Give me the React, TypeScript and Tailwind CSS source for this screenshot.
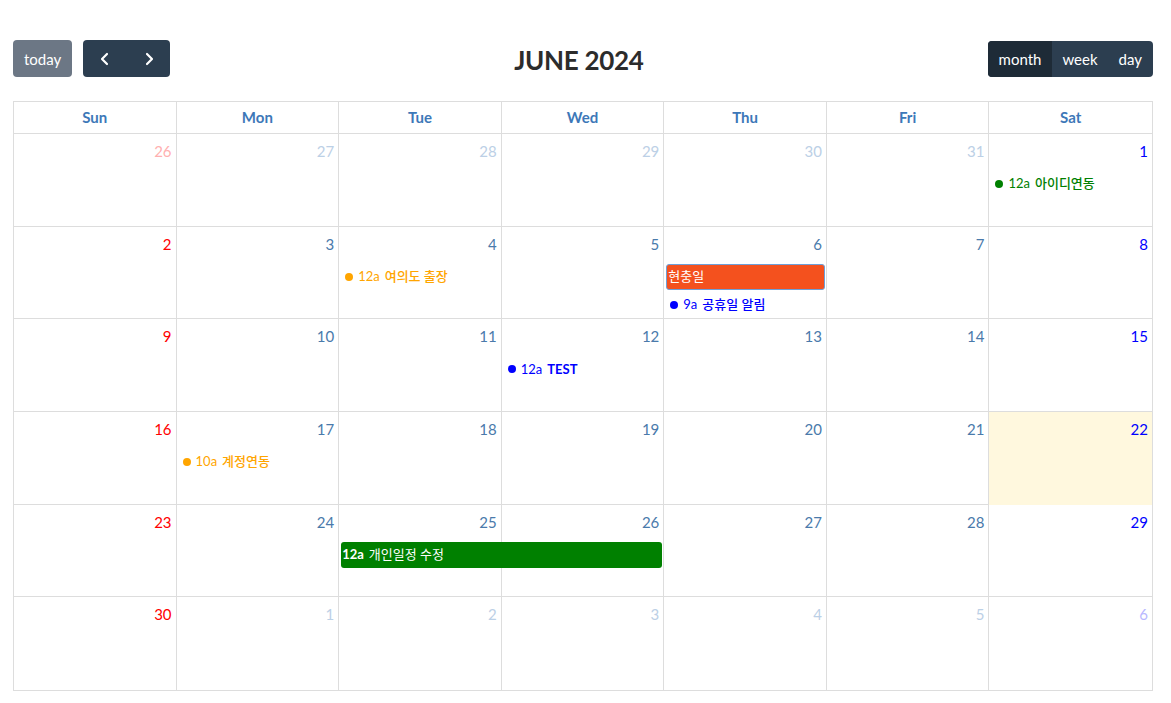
import React from 'react';

type Day = { n: number; cur: boolean };
type Ev = {
  week: number;
  col: number;
  span?: number;
  row: number;
  kind: 'dot' | 'block';
  time?: string;
  title: string;
  color: string;
  bold?: boolean;
};

const COL_START = ['', 'col-start-1', 'col-start-2', 'col-start-3', 'col-start-4', 'col-start-5', 'col-start-6', 'col-start-7'];
const COL_SPAN = ['', 'col-span-1', 'col-span-2', 'col-span-3'];
const ROW_START = ['', 'row-start-1', 'row-start-2', 'row-start-3'];

const weeks: Day[][] = [
  [26, 27, 28, 29, 30, 31].map((n) => ({ n, cur: false })).concat([{ n: 1, cur: true }]),
  [2, 3, 4, 5, 6, 7, 8].map((n) => ({ n, cur: true })),
  [9, 10, 11, 12, 13, 14, 15].map((n) => ({ n, cur: true })),
  [16, 17, 18, 19, 20, 21, 22].map((n) => ({ n, cur: true })),
  [23, 24, 25, 26, 27, 28, 29].map((n) => ({ n, cur: true })),
  [{ n: 30, cur: true }].concat([1, 2, 3, 4, 5, 6].map((n) => ({ n, cur: false }))),
];

const events: Ev[] = [
  { week: 0, col: 7, row: 2, kind: 'dot', time: '12a', title: '아이디연동', color: '#008000' },
  { week: 1, col: 3, row: 2, kind: 'dot', time: '12a', title: '여의도 출장', color: '#ffa500' },
  { week: 1, col: 5, row: 2, kind: 'block', title: '현충일', color: '#f4511e' },
  { week: 1, col: 5, row: 3, kind: 'dot', time: '9a', title: '공휴일 알림', color: '#0000ff' },
  { week: 2, col: 4, row: 2, kind: 'dot', time: '12a', title: 'TEST', color: '#0000ff', bold: true },
  { week: 3, col: 2, row: 2, kind: 'dot', time: '10a', title: '계정연동', color: '#ffa500' },
  { week: 4, col: 3, span: 2, row: 2, kind: 'block', time: '12a', title: '개인일정 수정', color: '#008000' },
];

const dayNames = ['Sun', 'Mon', 'Tue', 'Wed', 'Thu', 'Fri', 'Sat'];

function numColor(col: number, cur: boolean) {
  if (col === 0) return cur ? 'text-[#ff0000]' : 'text-[#ffb0b0]';
  if (col === 6) return cur ? 'text-[#0000ff]' : 'text-[#b8b8ff]';
  return cur ? 'text-[#4a7aab]' : 'text-[#bcd0e6]';
}

function Event({ e }: { e: Ev }) {
  const place = `${COL_START[e.col]} ${COL_SPAN[e.span ?? 1]} ${ROW_START[e.row]}`;
  if (e.kind === 'dot') {
    return (
      <div className={`${place} z-10 flex items-center gap-[5px] px-[6px] text-[13px] h-[26px] whitespace-nowrap`} style={{ color: e.color }}>
        <span className="w-[8px] h-[8px] rounded-full shrink-0" style={{ background: e.color }} />
        <span>{e.time}</span>
        <span className={e.bold ? 'font-bold' : 'font-medium'}>{e.title}</span>
      </div>
    );
  }
  return (
    <div className={`${place} z-10 mx-[2px] mb-[2px] flex items-center gap-[5px] px-[1px] rounded-[3px] text-white text-[13px] h-[26px] whitespace-nowrap ${e.time ? '' : 'border border-[#6e9fd8]'}`} style={{ background: e.color }}>
      {e.time && <span className="font-bold">{e.time}</span>}
      <span>{e.title}</span>
    </div>
  );
}

export default function App() {
  return (
    <div className="min-h-[703px] bg-white pt-[40px] pl-[13px]" style={{ fontFamily: 'Lato, "Noto Sans CJK KR", sans-serif' }}>
      <div className="w-[1140px]">
        <div className="flex items-center justify-between h-[37px] mb-[24px]">
          <div className="flex items-center gap-[11px]">
            <button className="h-[37px] pt-[2px] px-[11px] rounded-[4px] bg-[#6c7785] text-white text-[15px]">today</button>
            <div className="flex h-[37px] rounded-[4px] bg-[#2c3e50] overflow-hidden">
              <button className="w-[44px] flex items-center justify-center text-white">
                <svg width="14" height="14" viewBox="0 0 14 14" fill="none" stroke="currentColor" strokeWidth="2.2" strokeLinecap="round" strokeLinejoin="round"><path d="M9 2 4 7l5 5" /></svg>
              </button>
              <button className="w-[43px] flex items-center justify-center text-white">
                <svg width="14" height="14" viewBox="0 0 14 14" fill="none" stroke="currentColor" strokeWidth="2.2" strokeLinecap="round" strokeLinejoin="round"><path d="M5 2l5 5-5 5" /></svg>
              </button>
            </div>
          </div>
          <h2 className="text-[26px] pt-[3px] font-bold text-[#2c2c2c] tracking-[-0.3px]">JUNE 2024</h2>
          <div className="flex h-[36px] pt-[2px] rounded-[4px] bg-[#2c3e50] overflow-hidden text-white text-[15px]">
            <button className="px-[11px] -mt-[2px] pt-[2px] bg-[#1e2b37]">month</button>
            <button className="px-[10px]">week</button>
            <button className="px-[11px]">day</button>
          </div>
        </div>

        <div className="border border-[#dddddd]">
          <div className="grid grid-cols-7 h-[32px] border-b border-[#dddddd]">
            {dayNames.map((d, i) => (
              <div key={d} className={`flex items-center justify-center font-bold text-[15px] text-[#3d78b8] ${i < 6 ? 'border-r border-[#dddddd]' : ''}`}>{d}</div>
            ))}
          </div>
          {weeks.map((w, wi) => (
            <div key={wi} className={`grid grid-cols-7 grid-rows-[37px_28px_28px_1fr] h-[92.7px] ${wi < 5 ? 'border-b border-[#dddddd]' : ''}`}>
              {w.map((d, ci) => (
                <div
                  key={ci}
                  className={`${COL_START[ci + 1]} row-start-1 row-end-5 ${ci < 6 ? 'border-r border-[#dddddd]' : ''} ${wi === 3 && ci === 6 ? 'bg-[#fff8de]' : ''}`}
                >
                  <div className={`text-right px-[4px] pt-[5px] text-[15px] leading-[24px] ${numColor(ci, d.cur)}`}>{d.n}</div>
                </div>
              ))}
              {events.filter((e) => e.week === wi).map((e, i) => (
                <Event key={i} e={e} />
              ))}
            </div>
          ))}
        </div>
      </div>
    </div>
  );
}
